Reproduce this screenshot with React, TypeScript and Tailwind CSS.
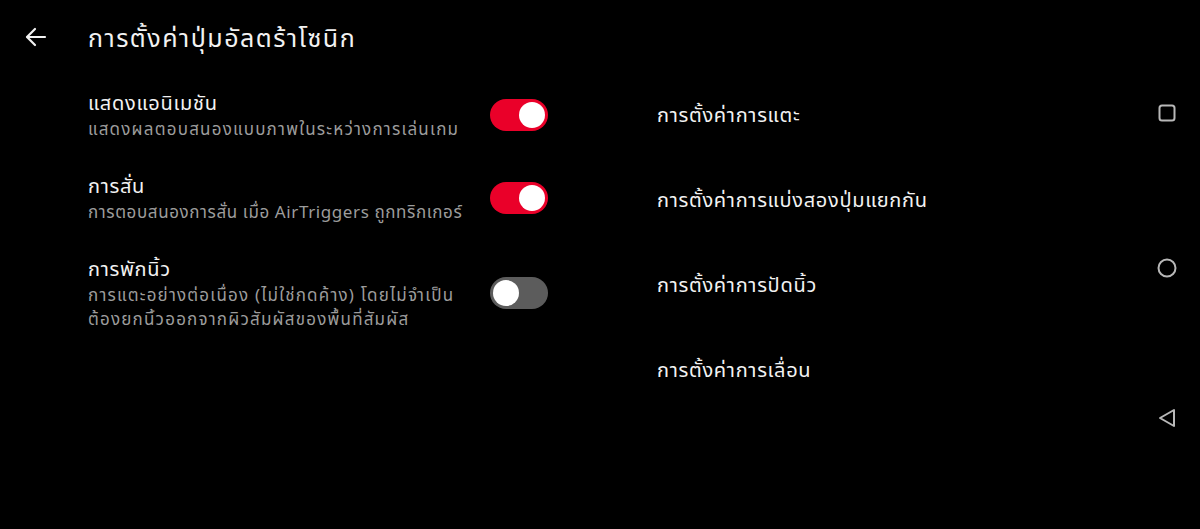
const font = { fontFamily: '"Noto Sans", "Noto Sans Thai", Roboto, "DejaVu Sans", sans-serif' };

function Toggle({ on }: { on: boolean }) {
  return (
    <div
      className={`w-[58px] h-[32px] rounded-full flex items-center px-[3px] ${
        on ? 'bg-[#ea0029] justify-end' : 'bg-[#5c5c5c] justify-start'
      }`}
    >
      <div className="w-[26px] h-[26px] rounded-full bg-white" />
    </div>
  );
}

const toggles = [
  { title: 'แสดงแอนิเมชัน', sub: ['แสดงผลตอบสนองแบบภาพในระหว่างการเล่นเกม'], on: true },
  { title: 'การสั่น', sub: ['การตอบสนองการสั่น เมื่อ AirTriggers ถูกทริกเกอร์'], on: true, latin: true },
  {
    title: 'การพักนิ้ว',
    sub: ['การแตะอย่างต่อเนื่อง (ไม่ใช่กดค้าง) โดยไม่จำเป็น', 'ต้องยกนิ้วออกจากผิวสัมผัสของพื้นที่สัมผัส'],
    on: false,
  },
];

const links = ['การตั้งค่าการแตะ', 'การตั้งค่าการแบ่งสองปุ่มแยกกัน', 'การตั้งค่าการปัดนิ้ว', 'การตั้งค่าการเลื่อน'];

export default function App() {
  return (
    <div className="w-full h-[529px] bg-black flex overflow-hidden" style={font}>
      <div className="flex-1 flex flex-col">
        {/* Header */}
        <div className="h-[74px] flex items-center">
          <svg className="ml-[24px] w-[24px] h-[24px]" viewBox="0 0 24 24" fill="none" stroke="#f2f2f2" strokeWidth="2.2" strokeLinecap="round" strokeLinejoin="round">
            <line x1="21" y1="12" x2="3.5" y2="12" />
            <polyline points="11 4 3 12 11 20" />
          </svg>
          <div className="ml-[40px] text-[25px] leading-[32px] tracking-[1.5px] text-[#f2f2f2]">การตั้งค่าปุ่มอัลตร้าโซนิก</div>
        </div>

        <div className="flex">
          {/* Left toggles */}
          <div className="ml-[88px] w-[460px] flex flex-col gap-[31px] pt-[15px]">
            {toggles.map((t, i) => (
              <div key={i} className="flex items-center justify-between">
                <div>
                  <div className="text-[20px] leading-[28px] tracking-[0.7px] text-[#f2f2f2]">{t.title}</div>
                  {t.sub.map((s, j) => (
                    <div
                      key={j}
                      className={`text-[17px] leading-[24px] text-[#9c9c9c] ${t.latin ? 'tracking-[0.6px]' : 'tracking-[1.2px]'}`}
                    >
                      {s}
                    </div>
                  ))}
                </div>
                <Toggle on={t.on} />
              </div>
            ))}
          </div>

          {/* Right links */}
          <div className="ml-[109px] flex flex-col mt-[-2px]">
            {links.map((l, i) => (
              <div key={i} className="h-[85px] flex items-center text-[20px] tracking-[0.7px] text-[#f2f2f2]">
                {l}
              </div>
            ))}
          </div>
        </div>
      </div>

      {/* Nav bar */}
      <div className="w-[66px] flex flex-col items-center pt-[104px] gap-[136px]">
        <svg className="w-[18px] h-[18px]" viewBox="0 0 18 18" fill="none" stroke="#b8b8b8" strokeWidth="2">
          <rect x="1.5" y="1.5" width="15" height="15" rx="2.5" />
        </svg>
        <svg className="w-[20px] h-[20px]" viewBox="0 0 20 20" fill="none" stroke="#b8b8b8" strokeWidth="2">
          <circle cx="10" cy="10" r="8.5" />
        </svg>
        <svg className="w-[18px] h-[20px] mt-[-6px]" viewBox="0 0 18 20" fill="none" stroke="#b8b8b8" strokeWidth="2" strokeLinejoin="round">
          <polygon points="16,2 16,18 2,10" />
        </svg>
      </div>
    </div>
  );
}
